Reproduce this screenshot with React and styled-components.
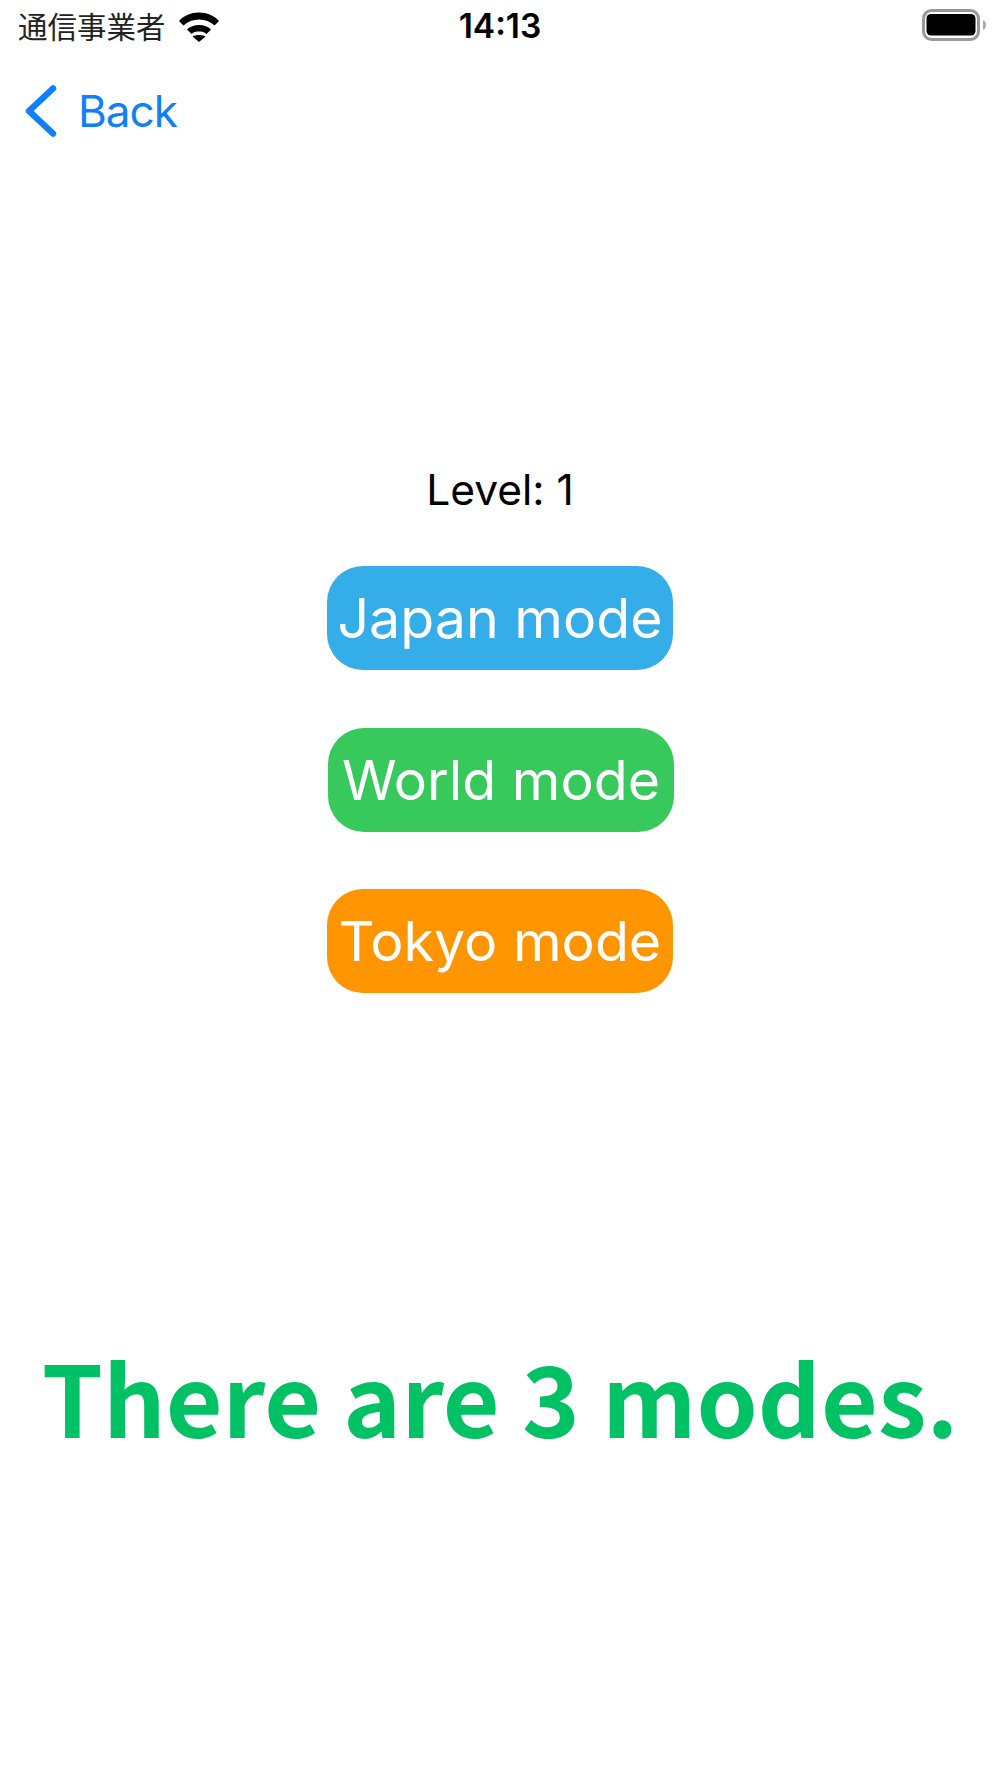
import React from "react";
import styled, { createGlobalStyle } from "styled-components";

const Global = createGlobalStyle`
  html, body { margin: 0; padding: 0; background: #fff; }
  body { font-family: Inter, "Liberation Sans", sans-serif; }
`;

const Page = styled.div`
  width: 1000px;
  height: 1778px;
  display: flex;
  flex-direction: column;
  overflow: hidden;
  background: #fff;
`;

const StatusBar = styled.div`
  height: 46px;
  display: grid;
  grid-template-columns: 1fr auto 1fr;
  align-items: center;
  padding: 0 18px;
  color: #000;
`;

const StatusLeft = styled.div`
  display: flex;
  align-items: center;
  gap: 13px;
`;

const Carrier = styled.span`
  font-family: "Noto Sans CJK JP", sans-serif;
  font-size: 29.5px;
  line-height: 46px;
  color: #222;
`;

const WifiSlot = styled.span`
  display: flex;
  margin-top: 4px;
`;

const Clock = styled.span`
  font-size: 33.5px;
  font-weight: 600;
  line-height: 46px;
  padding-top: 3px;
`;

const StatusRight = styled.div`
  display: flex;
  justify-content: flex-end;
  margin-right: -4px;
`;

const NavBar = styled.div`
  height: 130px;
  display: flex;
  align-items: center;
  gap: 21px;
  padding: 0 25px;
  color: #0f7ffb;
`;

const BackLabel = styled.span`
  font-size: 44px;
  letter-spacing: -1px;
  line-height: 50px;
`;

const Center = styled.div`
  margin-top: 289px;
  display: flex;
  flex-direction: column;
  align-items: center;
`;

const Level = styled.div`
  font-size: 42.5px;
  line-height: 50px;
  color: #000;
  margin-bottom: 51px;
`;

const ModeButton = styled.button`
  width: 346px;
  height: 104px;
  margin: 0 0 57.5px ${(p) => p.$shift || 0}px;
  padding: 0;
  border: 0;
  border-radius: 36px;
  background: ${(p) => p.$bg};
  color: #fff;
  font-family: Inter, sans-serif;
  font-size: 55.5px;
  line-height: 102px;
  white-space: nowrap;
  text-align: center;
`;

const Headline = styled.h1`
  margin: 264px 0 0;
  text-align: center;
  font-family: "Noto Sans CJK JP", sans-serif;
  font-size: 98px;
  font-weight: 700;
  line-height: 160px;
  color: #00c265;
  white-space: nowrap;
`;

const Wifi = () => (
  <svg width="40" height="30" viewBox="0 0 40 30" fill="#000">
    <path d="M0 9C5 3.500 12 .5 20 .5S35 3.500 40 9l-4.500 4.500C31.500 9.500 26 7.500 20 7.500S8.500 9.500 4.500 13.500z" />
    <path d="M8 17.500C11 14.500 15 13 20 13s9 1.500 12 4.500L27.500 22C25.500 20 23 19.500 20 19.500S14.500 20 12.500 22z" />
    <path d="M13.500 24.500C15 23.500 17.500 23 20 23s5 .5 6.500 1.500L20 30z" />
  </svg>
);

const Battery = () => (
  <svg width="64" height="32" viewBox="0 0 64 32">
    <rect x="1.500" y="1.500" width="55" height="29" rx="8" fill="none" stroke="#999" strokeWidth="3" />
    <rect x="4.500" y="5" width="49" height="21.500" rx="4.500" fill="#000" />
    <path d="M61 11c1.800.6 3 2.500 3 5s-1.200 4.400-3 5z" fill="#aaa" />
  </svg>
);

const BackChevron = () => (
  <svg width="32" height="52" viewBox="0 0 32 52" fill="none" stroke="#0f7ffb" strokeWidth="6.500" strokeLinecap="round" strokeLinejoin="round">
    <path d="M28 3.500L4 26l24 22.500" />
  </svg>
);

export default function App() {
  return (
    <Page>
      <Global />
      <StatusBar>
        <StatusLeft>
          <Carrier>通信事業者</Carrier>
          <WifiSlot>
            <Wifi />
          </WifiSlot>
        </StatusLeft>
        <Clock>14:13</Clock>
        <StatusRight>
          <Battery />
        </StatusRight>
      </StatusBar>
      <NavBar>
        <BackChevron />
        <BackLabel>Back</BackLabel>
      </NavBar>
      <Center>
        <Level>Level: 1</Level>
        <ModeButton $bg="#34ade9">Japan mode</ModeButton>
        <ModeButton $bg="#37c95c" $shift={2}>World mode</ModeButton>
        <ModeButton $bg="#ff9500">Tokyo mode</ModeButton>
      </Center>
      <Headline>There are 3 modes.</Headline>
    </Page>
  );
}
